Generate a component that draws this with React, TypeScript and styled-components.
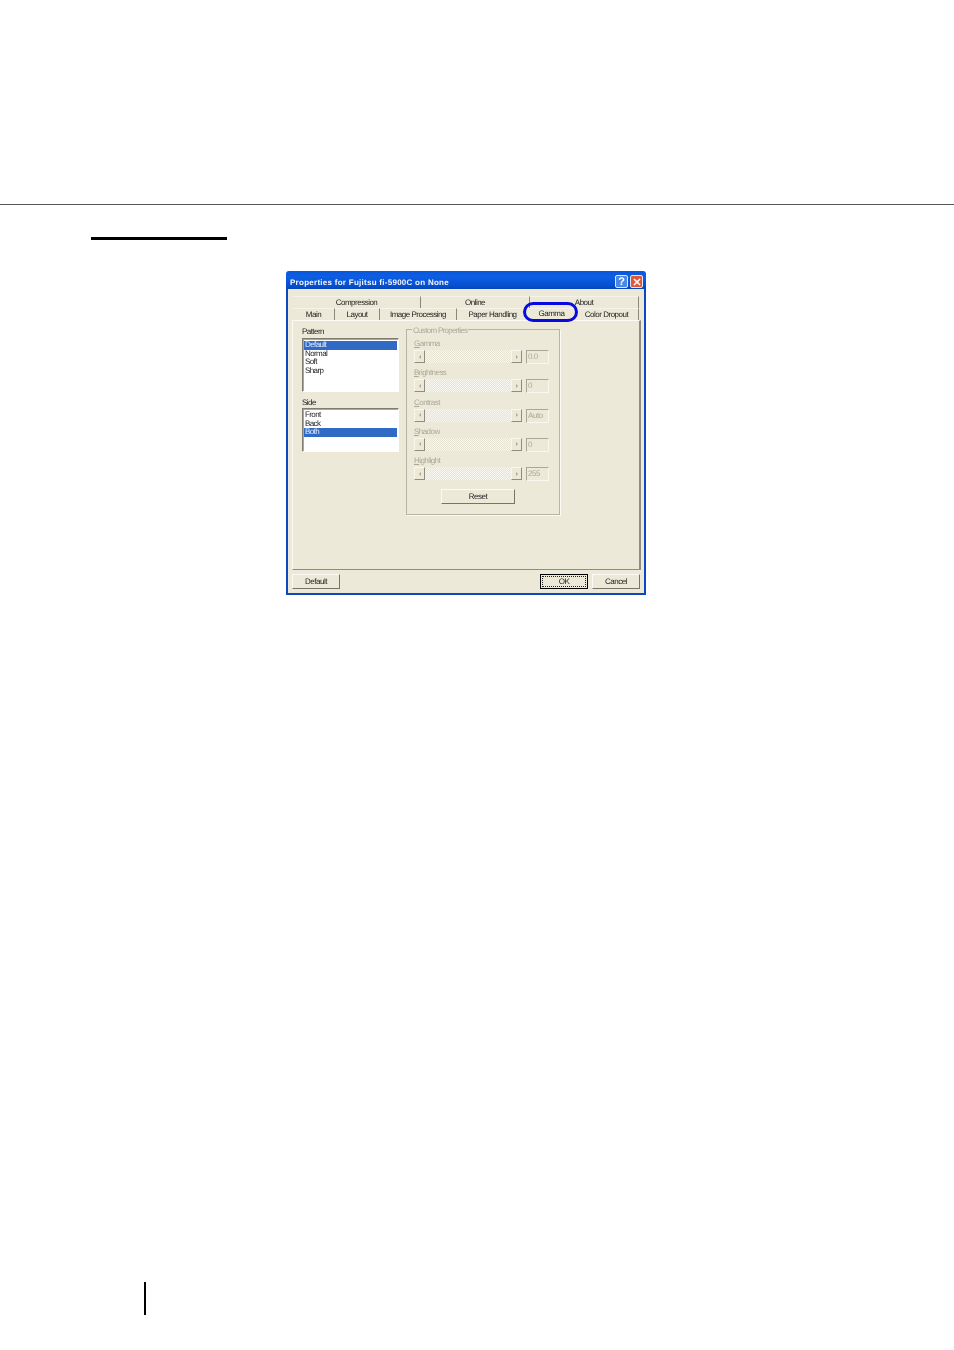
import styled, { createGlobalStyle } from "styled-components"

const GlobalStyle = createGlobalStyle`
  html, body {
    margin: 0;
    padding: 0;
    background: #fff;
  }
  body {
    font-family: "Liberation Sans", Arial, sans-serif;
  }
`

const Page = styled.div`
  width: 954px;
  height: 1350px;
  overflow: hidden;
  padding-top: 204px;
  box-sizing: border-box;
`

const TopRule = styled.div`
  height: 1px;
  background: #555;
`

const HeadBar = styled.div`
  width: 136px;
  height: 3px;
  margin: 32px 0 0 91px;
  background: #000;
`

const Dialog = styled.div`
  position: relative;
  width: 360px;
  height: 324px;
  margin: 31px 0 0 286px;
  display: flex;
  flex-direction: column;
  filter: blur(0.35px);
  text-rendering: geometricPrecision;
`

const TitleBar = styled.div`
  flex: 0 0 18px;
  display: flex;
  align-items: center;
  padding: 3px 3px 0 4px;
  box-sizing: border-box;
  border-radius: 3px 3px 0 0;
  background: linear-gradient(180deg, #0a56d8 0%, #0e5ee4 30%, #0650d0 80%, #0546bc 100%);
`

const TitleText = styled.div`
  flex: 1;
  margin-top: 2px;
  color: #f4f6fb;
  font-size: 8px;
  font-weight: 700;
  letter-spacing: 0.27px;
  white-space: nowrap;
`

const TitleButton = styled.div<{ $close?: boolean }>`
  width: 13px;
  height: 13px;
  margin-left: 2px;
  display: flex;
  align-items: center;
  justify-content: center;
  border: 1px solid #dfe8f8;
  border-radius: 2px;
  box-sizing: border-box;
  color: #fff;
  font-size: 11px;
  font-weight: 700;
  background: ${(p) => (p.$close ? "#e0583a" : "#4a88e8")};
`

const Body = styled.div`
  flex: 1;
  display: flex;
  flex-direction: column;
  padding: 7px 3px 3px 4px;
  box-sizing: border-box;
  background: #ece9d8;
  border: solid #0c48c4;
  border-width: 0 2px 2px 2px;
`

const TabRow = styled.div<{ $columns: string }>`
  display: grid;
  grid-template-columns: ${(p) => p.$columns};
  height: 12px;
  margin-left: 1px;
  margin-right: 2px;
`

const Tab = styled.div<{ $open?: boolean; $lift?: number }>`
  display: flex;
  align-items: center;
  justify-content: center;
  padding-bottom: ${(p) => p.$lift ?? 0}px;
  box-sizing: border-box;
  border-right: 1px solid ${(p) => (p.$open ? "transparent" : "#8a8878")};
  border-top: 1px solid #f6f4ea;
  font-size: 8px;
  letter-spacing: -0.5px;
  color: #222;
  white-space: nowrap;
`

const Panel = styled.div`
  flex: 0 0 250px;
  display: flex;
  gap: 7px;
  padding: 6px 0 0 9px;
  box-sizing: border-box;
  background: #ece9d8;
  border: solid;
  border-width: 1px 2px 1px 1px;
  border-color: #fbfaf4 #8f8d7e #8f8d7e #fbfaf4;
`

const ListColumn = styled.div`
  width: 97px;
  display: flex;
  flex-direction: column;
`

const FieldLabel = styled.div<{ $gap?: number }>`
  height: 10px;
  line-height: 10px;
  margin-top: ${(p) => p.$gap ?? 0}px;
  font-size: 8px;
  letter-spacing: -0.55px;
  color: #222;
`

const ListBox = styled.div<{ $height: number; $gap: number }>`
  height: ${(p) => p.$height}px;
  margin-top: ${(p) => p.$gap}px;
  padding: 2px 1px 0 1px;
  box-sizing: border-box;
  background: #fff;
  border: solid 1px;
  border-color: #7f7d70 #fff #fff #7f7d70;
  box-shadow: inset 1px 1px 0 #a9a798;
`

const ListItem = styled.div<{ $selected?: boolean }>`
  height: 8.65px;
  line-height: 8.65px;
  padding-left: 1px;
  font-size: 8px;
  letter-spacing: -0.6px;
  color: ${(p) => (p.$selected ? "#e4ebf8" : "#222")};
  background: ${(p) => (p.$selected ? "#316ac5" : "transparent")};
`

const GroupBox = styled.div`
  position: relative;
  width: 154px;
  height: 186px;
  margin-top: 2px;
  padding: 8px 0 0 7px;
  box-sizing: border-box;
  border: 1px solid #b6b4a4;
  box-shadow: 1px 1px 0 #fbfaf4;
`

const GroupLegend = styled.div`
  position: absolute;
  top: -4px;
  left: 5px;
  padding: 0 1px;
  background: #ece9d8;
  font-size: 8px;
  line-height: 10px;
  letter-spacing: -0.7px;
  color: #aca899;
  white-space: nowrap;
`

const SliderRow = styled.div`
  height: 29.25px;
`

const SliderLabel = styled.div`
  height: 10px;
  line-height: 11px;
  font-size: 8px;
  letter-spacing: -0.55px;
  color: #aca899;
`

const SliderControls = styled.div`
  display: flex;
  align-items: flex-start;
  margin-top: 2px;
`

const ArrowButton = styled.div<{ $direction: "left" | "right" }>`
  flex: 0 0 11px;
  height: 13px;
  display: flex;
  align-items: center;
  justify-content: center;
  box-sizing: border-box;
  border: solid 1px;
  border-color: #f8f7f0 #8f8d7e #8f8d7e #f8f7f0;
  background: #ece9d8;

  &::before {
    content: "";
    border-style: solid;
    border-width: 2px 0 2px 2px;
    border-color: transparent transparent transparent #aca899;
    transform: ${(p) => (p.$direction === "left" ? "rotate(180deg)" : "none")};
  }
`

const SliderTrack = styled.div`
  flex: 0 0 86px;
  height: 13px;
  background-color: #f4f3ea;
  background-image: repeating-conic-gradient(#e7e4d4 0 25%, #f7f6ef 0 50%);
  background-size: 2px 2px;
`

const ValueBox = styled.div`
  width: 23px;
  height: 14px;
  margin-left: 4px;
  padding-left: 1px;
  box-sizing: border-box;
  border: solid 1px;
  border-color: #a9a798 #f8f7f0 #f8f7f0 #a9a798;
  font-size: 8px;
  line-height: 12px;
  letter-spacing: -0.4px;
  color: #aca899;
`

const ButtonRow = styled.div`
  display: flex;
  padding-left: 27px;
  margin-top: 5px;
`

const PushButton = styled.div<{ $width: number; $focused?: boolean }>`
  position: relative;
  width: ${(p) => p.$width}px;
  height: 15px;
  display: flex;
  align-items: center;
  justify-content: center;
  box-sizing: border-box;
  font-size: 8px;
  letter-spacing: -0.45px;
  color: #222;
  background: #ece9d8;
  border: solid 1px;
  border-color: ${(p) => (p.$focused ? "#000" : "#fbfaf4 #77756a #77756a #fbfaf4")};

  ${(p) =>
    p.$focused
      ? `&::after {
          content: "";
          position: absolute;
          inset: 1px;
          border: 1px dotted #222;
        }`
      : ""}
`

const Footer = styled.div`
  display: flex;
  margin-top: 4px;
  gap: 4px;
  padding-right: 1px;
`

const FooterSpacer = styled.div`
  flex: 1;
`

const Highlight = styled.div`
  position: absolute;
  left: 237px;
  top: 31px;
  width: 55px;
  height: 20px;
  box-sizing: border-box;
  border: 3px solid #0808e0;
  border-radius: 10px;
`

const FolioBar = styled.div`
  width: 2px;
  height: 33px;
  margin: 687px 0 0 144px;
  background: #000;
`

const sliders = [
  { label: "Gamma", value: "0.0" },
  { label: "Brightness", value: "0" },
  { label: "Contrast", value: "Auto" },
  { label: "Shadow", value: "0" },
  { label: "Highlight", value: "255" },
]

export default function App() {
  return (
    <>
      <GlobalStyle />
      <Page>
        <TopRule />
        <HeadBar />
        <Dialog>
          <TitleBar>
            <TitleText>Properties for Fujitsu fi-5900C on None</TitleText>
            <TitleButton>?</TitleButton>
            <TitleButton $close>
              <svg width="8" height="8" viewBox="0 0 8 8">
                <path d="M1 1 L7 7 M7 1 L1 7" stroke="#fff" strokeWidth="1.6" />
              </svg>
            </TitleButton>
          </TitleBar>
          <Body>
            <TabRow $columns="128px 109px 1fr">
              <Tab>Compression</Tab>
              <Tab>Online</Tab>
              <Tab>About</Tab>
            </TabRow>
            <TabRow $columns="42px 45px 77px 72px 46px 1fr">
              <Tab $lift={2}>Main</Tab>
              <Tab $lift={2}>Layout</Tab>
              <Tab $lift={2}>Image Processing</Tab>
              <Tab $lift={2} $open>
                Paper Handling
              </Tab>
              <Tab $lift={4} $open>
                Gamma
              </Tab>
              <Tab $lift={2}>Color Dropout</Tab>
            </TabRow>
            <Panel>
              <ListColumn>
                <FieldLabel>Pattern</FieldLabel>
                <ListBox $height={54} $gap={1}>
                  <ListItem $selected>Default</ListItem>
                  <ListItem>Normal</ListItem>
                  <ListItem>Soft</ListItem>
                  <ListItem>Sharp</ListItem>
                </ListBox>
                <FieldLabel $gap={6}>Side</FieldLabel>
                <ListBox $height={44} $gap={0}>
                  <ListItem>Front</ListItem>
                  <ListItem>Back</ListItem>
                  <ListItem $selected>Both</ListItem>
                </ListBox>
              </ListColumn>
              <GroupBox>
                <GroupLegend>Custom Properties</GroupLegend>
                {sliders.map((s) => (
                  <SliderRow key={s.label}>
                    <SliderLabel>
                      <u>{s.label[0]}</u>
                      {s.label.slice(1)}
                    </SliderLabel>
                    <SliderControls>
                      <ArrowButton $direction="left" />
                      <SliderTrack />
                      <ArrowButton $direction="right" />
                      <ValueBox>{s.value}</ValueBox>
                    </SliderControls>
                  </SliderRow>
                ))}
                <ButtonRow>
                  <PushButton $width={74}>Reset</PushButton>
                </ButtonRow>
              </GroupBox>
            </Panel>
            <Footer>
              <PushButton $width={48}>Default</PushButton>
              <FooterSpacer />
              <PushButton $width={48} $focused>
                OK
              </PushButton>
              <PushButton $width={48}>Cancel</PushButton>
            </Footer>
          </Body>
          <Highlight />
        </Dialog>
        <FolioBar />
      </Page>
    </>
  )
}
